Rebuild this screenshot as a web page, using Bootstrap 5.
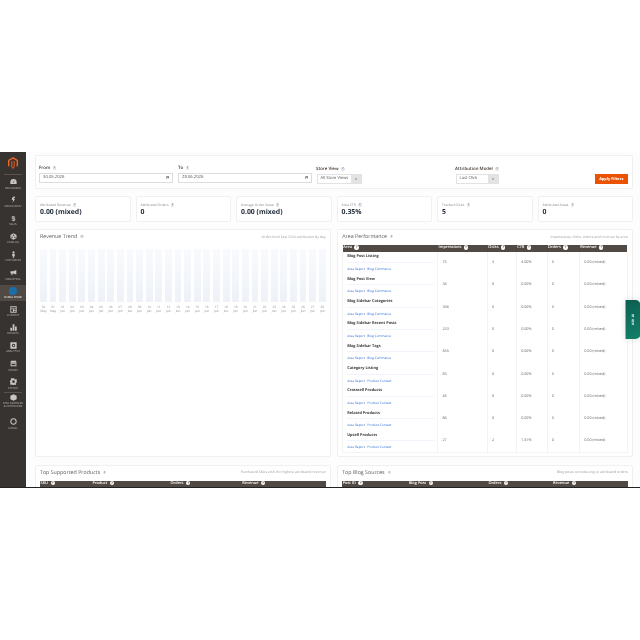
<!DOCTYPE html>
<html lang="en">
<head>
<meta charset="utf-8">
<title>Attribution dashboard</title>
<link href="https://cdn.jsdelivr.net/npm/bootstrap@5.3.0/dist/css/bootstrap.min.css" rel="stylesheet">
<style>
html,body{margin:0;background:#fff;height:640px;overflow:hidden;font-family:"Open Sans",sans-serif;text-rendering:geometricPrecision;}
.shot{margin-top:152px;height:336px;border-bottom:1px solid #222;overflow:hidden;background:#fdfdfd;filter:blur(.45px);position:relative;}
.side{width:26px;flex:none;background:#373330;color:#c9c5c1;}
.logo-box{height:22px;}
.logo-box svg{width:10px;height:12px;}
.side-item{height:18.2px;color:#bdb8b3;}
.side-item svg{width:7px;height:7px;fill:#c9c5c1;flex:none;}
.side-item span{font-size:2.7px;line-height:3.2px;text-transform:uppercase;margin-top:1.4px;text-align:center;white-space:nowrap;}
.side-active{background:#514943;color:#fff;height:16.4px;margin:.8px 0 1px;}
.dot{width:7.5px;height:7.5px;border-radius:50%;background:#1c6ea8;flex:none;}
.side-rule{height:1px;background:#5a534d;margin:-1px 4px 0;}
.side-tall{height:21.6px;padding-top:.6px;}
.side-top{height:1px;background:#5a534d;margin:0 4px;}
.main-area{padding:2.5px 7px 0 9px;min-width:0;flex:1;}
.pane{background:#fff;border:1px solid #f0f0f0;border-radius:2px;}
.filter-pane{height:34px;padding:0 4px 4px 3px;align-items:flex-end;}
.lbl{font-size:4.4px;line-height:5px;color:#41362f;font-weight:600;margin-bottom:1.5px;white-space:nowrap;}
.lbl-date{width:134px;margin-right:5px;margin-bottom:1px;}
.lbl-date + .lbl-date{margin-right:4px;}
.fake-input{height:10px;border:1px solid #dcdcdc;background:#fff;font-size:4.2px;line-height:8px;color:#555;padding:0 3px;align-items:center;justify-content:space-between;}
.fake-input svg{width:3.5px;height:3.5px;flex:none;}
.fake-sel{height:10px;border:1px solid #e2e2e2;background:#fff;font-size:4.1px;line-height:8px;color:#555;align-items:stretch;margin-left:1px;}
.fake-sel b{font-weight:400;padding:0 2.5px;display:flex;align-items:center;flex:1;white-space:nowrap;}
.fake-sel i{width:10px;flex:none;background:#e3e3e3;display:flex;align-items:center;justify-content:center;font-style:normal;font-size:3px;color:#514943;}
.store-col{width:46px;margin-right:93px;}
.model-col{width:44px;}
.apply{height:10px;width:33.5px;background:#eb5202;border:0;color:#fff;font-size:3.9px;line-height:10px;font-weight:700;padding:0;border-radius:0;white-space:nowrap;margin-left:auto;}
.kpi-grid{display:grid;grid-template-columns:repeat(6,1fr);gap:5px;margin-top:7.5px;}
.kpi{height:25.5px;padding:6px 4px 0;}
.kpi-t{font-size:3.4px;line-height:4px;color:#8a8a8a;white-space:nowrap;}
.kpi-v{font-size:6.9px;line-height:8px;font-weight:700;color:#1f2937;margin-top:2.4px;white-space:nowrap;}
.q{display:inline-block;width:3.4px;height:3.4px;border-radius:50%;background:#dde3ea;color:#667;font-size:2.6px;line-height:3.4px;text-align:center;font-weight:700;margin-left:1.5px;vertical-align:middle;}
.two-col{display:grid;grid-template-columns:295.7px 295.7px;gap:7.5px 6.5px;margin-top:7.5px;}
.panel-a{height:228px;padding:0 4px;}
.panel-b{height:60px;padding:0 4px;}
.p-head{height:15.3px;padding-bottom:1px;align-items:center;justify-content:space-between;}
.p-title{font-size:5.3px;color:#5b5b5b;font-weight:500;white-space:nowrap;}
.p-note{font-size:3.5px;color:#9a9a9a;white-space:nowrap;}
.bars{display:grid;grid-template-columns:repeat(30,1fr);column-gap:2.75px;margin-top:3.4px;}
.bar-col{text-align:center;font-size:3.1px;line-height:4px;color:#8d8d8d;min-width:0;}
.bar-fill{height:53.5px;background:linear-gradient(#f8fafd,#eef2f8);margin-bottom:2.5px;}
.perf{width:100%;table-layout:fixed;border-collapse:collapse;margin:0;}
.perf th{background:#514943;color:#fff;font-size:3.9px;line-height:6px;height:6px;font-weight:600;padding:0 0 0 .5px;white-space:nowrap;border:0;}
.perf th .q{background:#fff;color:#514943;width:4.4px;height:4.4px;line-height:4.4px;font-size:3.2px;}
.perf td{height:22.33px;padding:0 4px;font-size:3.7px;color:#666;border:0;border-right:1px solid #f3f3f3;vertical-align:middle;white-space:nowrap;background:#fff;}
.perf tr:last-child td{border-bottom:1px solid #f3f3f3;}
.perf td:first-child{border-left:1px solid #f3f3f3;}
.c1{width:95.3px;}.c2{width:49.4px;}.c3{width:29.3px;}.c4{width:30.7px;}.c5{width:32.4px;}
.a-name{font-size:3.85px;font-weight:700;color:#3b3b3b;line-height:5px;}
.a-bar{height:1px;background:#f0f4fb;margin:2.6px 0 3.9px;width:88px;}
.a-links{font-size:3.2px;line-height:4px;color:#2f6fd6;}
.a-links span{margin-right:2.4px;}
.s1{width:52px;}.s2{width:78px;}.s3{width:71.7px;}
.p1{width:66px;}.p2{width:79.7px;}.p3{width:64.6px;}
.ai-tab{position:absolute;right:0;top:148px;width:14.5px;height:39px;background:linear-gradient(160deg,#12806a,#0c5f50);border-radius:5px 0 0 5px;box-shadow:0 0 7px rgba(0,0,0,.12);color:#fff;font-size:3.2px;font-weight:700;writing-mode:vertical-rl;transform:rotate(180deg);text-align:center;line-height:14.5px;letter-spacing:.2px;}
</style>
</head>
<body>
<div class="shot d-flex">
  <nav class="side d-flex flex-column">
    <div class="logo-box d-flex align-items-center justify-content-center">
      <svg viewBox="0 0 20 24"><path fill="#f26322" d="M10 0 0 5.8v12L2.8 19.4V7.500L10 3.300l7.200 4.200v11.900l2.800-1.600v-12Zm-1.400 7.700v12.600L10 21.200l1.400-.9V7.700l1.900 1v11.200L10 24l-3.300-4.100V8.700Z"/></svg>
    </div>
    <div class="side-top"></div>
    <div class="side-item d-flex flex-column align-items-center justify-content-center"><svg viewBox="0 0 10 10"><path d="M5 1.500a4.500 4.500 0 0 0-4.500 4.500v2.500h9V6A4.500 4.500 0 0 0 5 1.500Zm-.6 5 1.600-3 .4.200-1 3.200Z"/></svg><span>Dashboard</span></div>
    <div class="side-item d-flex flex-column align-items-center justify-content-center"><svg viewBox="0 0 10 10"><path d="M6 .5 7.500 2 5 3.500 7 5 3.500 9.500 4.500 6 2.500 5 3 2.500Z"/></svg><span>Media Menu</span></div>
    <div class="side-item d-flex flex-column align-items-center justify-content-center"><svg viewBox="0 0 10 10"><text x="5" y="9" text-anchor="middle" font-size="10" font-weight="700" fill="#c9c5c1" font-family="Liberation Sans">$</text></svg><span>Sales</span></div>
    <div class="side-item d-flex flex-column align-items-center justify-content-center"><svg viewBox="0 0 10 10"><path d="m5 .5 4.300 2.400v4.400L5 9.700.7 7.300V2.900Zm0 1.700a1 1 0 1 0 0 2 1 1 0 0 0 0-2ZM3 5a1 1 0 1 0 0 2 1 1 0 0 0 0-2Zm4 0a1 1 0 1 0 0 2 1 1 0 0 0 0-2Z"/></svg><span>Catalog</span></div>
    <div class="side-item d-flex flex-column align-items-center justify-content-center"><svg viewBox="0 0 10 10"><path d="M5 .3a1.600 1.600 0 1 1 0 3.200A1.600 1.600 0 0 1 5 .3ZM3.200 4h3.600v3H6v2.700H4V7h-.8Z"/></svg><span>Customers</span></div>
    <div class="side-item d-flex flex-column align-items-center justify-content-center"><svg viewBox="0 0 10 10"><path d="M9 1.500v6.500L4.500 6.300H3.200l.6 2.700H2.500L1.800 6.300H.7V3.200h3.800Z"/></svg><span>Marketing</span></div>
    <div class="side-item side-active d-flex flex-column align-items-center justify-content-center"><div class="dot"></div><span>Komal Store</span></div>
    <div class="side-item d-flex flex-column align-items-center justify-content-center"><svg viewBox="0 0 10 10"><path fill-rule="evenodd" d="M.5.500h9v9h-9Zm1.200 1.200V3.400h6.600V1.700Zm0 2.800v3.800h2.600V4.500Zm3.800 0v1.200h2.800V4.500Zm0 2.300v1.500h2.800V6.800Z"/></svg><span>Content</span></div>
    <div class="side-item d-flex flex-column align-items-center justify-content-center"><svg viewBox="0 0 10 10"><path d="M.5 5.500h2.500v4H.5Zm3.300-5h2.500v9H3.800Zm3.300 3h2.500v6H7.100Z"/></svg><span>Reports</span></div>
    <div class="side-item d-flex flex-column align-items-center justify-content-center"><svg viewBox="0 0 10 10"><path fill-rule="evenodd" d="M.5.500h9v9h-9ZM5 2.500a2.500 2.500 0 1 0 0 5 2.500 2.500 0 0 0 0-5Zm0 1.300a1.200 1.200 0 1 1 0 2.400 1.200 1.200 0 0 1 0-2.400Z"/></svg><span>Analytics</span></div>
    <div class="side-item d-flex flex-column align-items-center justify-content-center"><svg viewBox="0 0 10 10"><path d="M1.500 1h7l1 3H.5Zm-.7 3.800h8.400V9H.8Zm1.400 1v1.800h5.600V5.800Z"/></svg><span>Stores</span></div>
    <div class="side-item d-flex flex-column align-items-center justify-content-center"><svg viewBox="0 0 10 10"><path fill-rule="evenodd" d="M4 .3h2l.3 1.400 1.200.5 1.200-.8 1.300 1.400-.8 1.200.5 1.200L10 4.500v2l-1.300.1-.5 1.200.8 1.100-1.400 1.300-1.200-.8-1.100.5-.3.9H3.800l-.3-1.100-1.100-.5-1.200.8L0 8.200l.8-1.200-.5-1.100L0 5.500v-2l1.300-.3.500-1.200L1 .9 2.400 0l1.200.8Zm1 3a1.900 1.900 0 1 0 0 3.800A1.900 1.900 0 0 0 5 3.300Z"/></svg><span>System</span></div>
    <div class="side-rule"></div>
    <div class="side-item side-tall d-flex flex-column align-items-center justify-content-start"><svg viewBox="0 0 10 10"><path d="m5 .3 4.500 2.200v5L5 9.700.5 7.500v-5Z"/></svg><span>Find Partners<br>&amp; Extensions</span></div>
    <div class="side-item d-flex flex-column align-items-center justify-content-center"><svg viewBox="0 0 10 10"><path fill-rule="evenodd" d="M5 .5a4.500 4.500 0 1 1 0 9 4.500 4.500 0 0 1 0-9Zm0 1.400a3.100 3.100 0 1 0 0 6.200 3.100 3.100 0 0 0 0-6.200Z"/></svg><span>Komal</span></div>
  </nav>
  <main class="main-area">
    <section class="pane filter-pane d-flex">
      <div class="lbl-date">
        <div class="lbl">From <span class="q">?</span></div>
        <div class="fake-input d-flex"><span>30.05.2026</span><svg viewBox="0 0 10 10"><path fill="#333" fill-rule="evenodd" d="M1 1.500h8V9.500H1Zm1 3V8.500h6V4.500Z"/></svg></div>
      </div>
      <div class="lbl-date">
        <div class="lbl">To <span class="q">?</span></div>
        <div class="fake-input d-flex"><span>28.06.2026</span><svg viewBox="0 0 10 10"><path fill="#333" fill-rule="evenodd" d="M1 1.500h8V9.500H1Zm1 3V8.500h6V4.500Z"/></svg></div>
      </div>
      <div class="store-col">
        <div class="lbl">Store View <span class="q">?</span></div>
        <div class="fake-sel d-flex"><b>All Store Views</b><i>▾</i></div>
      </div>
      <div class="model-col">
        <div class="lbl">Attribution Model <span class="q">?</span></div>
        <div class="fake-sel d-flex"><b>Last Click</b><i>▾</i></div>
      </div>
      <button class="btn apply" type="button">Apply Filters</button>
    </section>
    <section class="kpi-grid">
      <div class="pane kpi"><div class="kpi-t">Attributed Revenue <span class="q">?</span></div><div class="kpi-v">0.00 (mixed)</div></div>
      <div class="pane kpi"><div class="kpi-t">Attributed Orders <span class="q">?</span></div><div class="kpi-v">0</div></div>
      <div class="pane kpi"><div class="kpi-t">Average Order Value <span class="q">?</span></div><div class="kpi-v">0.00 (mixed)</div></div>
      <div class="pane kpi"><div class="kpi-t">Area CTR <span class="q">?</span></div><div class="kpi-v">0.35%</div></div>
      <div class="pane kpi"><div class="kpi-t">Tracked Clicks <span class="q">?</span></div><div class="kpi-v">5</div></div>
      <div class="pane kpi"><div class="kpi-t">Attributed Areas <span class="q">?</span></div><div class="kpi-v">0</div></div>
    </section>
    <section class="two-col">
      <div class="pane panel-a">
        <div class="p-head d-flex"><span class="p-title">Revenue Trend <span class="q">?</span></span><span class="p-note">Order-level Last Click attribution by day</span></div>
        <div class="bars">
          <div class="bar-col"><div class="bar-fill"></div>30<br>May</div>
          <div class="bar-col"><div class="bar-fill"></div>31<br>May</div>
          <div class="bar-col"><div class="bar-fill"></div>01<br>Jun</div>
          <div class="bar-col"><div class="bar-fill"></div>02<br>Jun</div>
          <div class="bar-col"><div class="bar-fill"></div>03<br>Jun</div>
          <div class="bar-col"><div class="bar-fill"></div>04<br>Jun</div>
          <div class="bar-col"><div class="bar-fill"></div>05<br>Jun</div>
          <div class="bar-col"><div class="bar-fill"></div>06<br>Jun</div>
          <div class="bar-col"><div class="bar-fill"></div>07<br>Jun</div>
          <div class="bar-col"><div class="bar-fill"></div>08<br>Jun</div>
          <div class="bar-col"><div class="bar-fill"></div>09<br>Jun</div>
          <div class="bar-col"><div class="bar-fill"></div>10<br>Jun</div>
          <div class="bar-col"><div class="bar-fill"></div>11<br>Jun</div>
          <div class="bar-col"><div class="bar-fill"></div>12<br>Jun</div>
          <div class="bar-col"><div class="bar-fill"></div>13<br>Jun</div>
          <div class="bar-col"><div class="bar-fill"></div>14<br>Jun</div>
          <div class="bar-col"><div class="bar-fill"></div>15<br>Jun</div>
          <div class="bar-col"><div class="bar-fill"></div>16<br>Jun</div>
          <div class="bar-col"><div class="bar-fill"></div>17<br>Jun</div>
          <div class="bar-col"><div class="bar-fill"></div>18<br>Jun</div>
          <div class="bar-col"><div class="bar-fill"></div>19<br>Jun</div>
          <div class="bar-col"><div class="bar-fill"></div>20<br>Jun</div>
          <div class="bar-col"><div class="bar-fill"></div>21<br>Jun</div>
          <div class="bar-col"><div class="bar-fill"></div>22<br>Jun</div>
          <div class="bar-col"><div class="bar-fill"></div>23<br>Jun</div>
          <div class="bar-col"><div class="bar-fill"></div>24<br>Jun</div>
          <div class="bar-col"><div class="bar-fill"></div>25<br>Jun</div>
          <div class="bar-col"><div class="bar-fill"></div>26<br>Jun</div>
          <div class="bar-col"><div class="bar-fill"></div>27<br>Jun</div>
          <div class="bar-col"><div class="bar-fill"></div>28<br>Jun</div>
        </div>
      </div>
      <div class="pane panel-a">
        <div class="p-head d-flex"><span class="p-title">Area Performance <span class="q">?</span></span><span class="p-note">Impressions, clicks, orders and revenue by area</span></div>
        <table class="perf">
          <thead><tr><th class="c1">Area <span class="q">?</span></th><th class="c2">Impressions <span class="q">?</span></th><th class="c3">Clicks <span class="q">?</span></th><th class="c4">CTR <span class="q">?</span></th><th class="c5">Orders <span class="q">?</span></th><th>Revenue <span class="q">?</span></th></tr></thead>
          <tbody>
            <tr><td><div class="a-name">Blog Post Listing</div><div class="a-bar"></div><div class="a-links"><span>Area Report</span><span>Blog Commerce</span></div></td><td>75</td><td>3</td><td>4.00%</td><td>0</td><td>0.00 (mixed)</td></tr>
            <tr><td><div class="a-name">Blog Post View</div><div class="a-bar"></div><div class="a-links"><span>Area Report</span><span>Blog Commerce</span></div></td><td>34</td><td>0</td><td>0.00%</td><td>0</td><td>0.00 (mixed)</td></tr>
            <tr><td><div class="a-name">Blog Sidebar Categories</div><div class="a-bar"></div><div class="a-links"><span>Area Report</span><span>Blog Commerce</span></div></td><td>396</td><td>0</td><td>0.00%</td><td>0</td><td>0.00 (mixed)</td></tr>
            <tr><td><div class="a-name">Blog Sidebar Recent Posts</div><div class="a-bar"></div><div class="a-links"><span>Area Report</span><span>Blog Commerce</span></div></td><td>233</td><td>0</td><td>0.00%</td><td>0</td><td>0.00 (mixed)</td></tr>
            <tr><td><div class="a-name">Blog Sidebar Tags</div><div class="a-bar"></div><div class="a-links"><span>Area Report</span><span>Blog Commerce</span></div></td><td>455</td><td>0</td><td>0.00%</td><td>0</td><td>0.00 (mixed)</td></tr>
            <tr><td><div class="a-name">Category Listing</div><div class="a-bar"></div><div class="a-links"><span>Area Report</span><span>Product Context</span></div></td><td>83</td><td>0</td><td>0.00%</td><td>0</td><td>0.00 (mixed)</td></tr>
            <tr><td><div class="a-name">Crosssell Products</div><div class="a-bar"></div><div class="a-links"><span>Area Report</span><span>Product Context</span></div></td><td>44</td><td>0</td><td>0.00%</td><td>0</td><td>0.00 (mixed)</td></tr>
            <tr><td><div class="a-name">Related Products</div><div class="a-bar"></div><div class="a-links"><span>Area Report</span><span>Product Context</span></div></td><td>86</td><td>0</td><td>0.00%</td><td>0</td><td>0.00 (mixed)</td></tr>
            <tr><td><div class="a-name">Upsell Products</div><div class="a-bar"></div><div class="a-links"><span>Area Report</span><span>Product Context</span></div></td><td>27</td><td>2</td><td>7.41%</td><td>0</td><td>0.00 (mixed)</td></tr>
          </tbody>
        </table>
      </div>
      <div class="pane panel-b">
        <div class="p-head d-flex"><span class="p-title">Top Supported Products <span class="q">?</span></span><span class="p-note">Purchased SKUs with the highest attributed revenue</span></div>
        <table class="perf"><thead><tr><th class="s1">SKU <span class="q">?</span></th><th class="s2">Product <span class="q">?</span></th><th class="s3">Orders <span class="q">?</span></th><th>Revenue <span class="q">?</span></th></tr></thead></table>
      </div>
      <div class="pane panel-b">
        <div class="p-head d-flex"><span class="p-title">Top Blog Sources <span class="q">?</span></span><span class="p-note">Blog posts contributing to attributed orders</span></div>
        <table class="perf"><thead><tr><th class="p1">Post ID <span class="q">?</span></th><th class="p2">Blog Post <span class="q">?</span></th><th class="p3">Orders <span class="q">?</span></th><th>Revenue <span class="q">?</span></th></tr></thead></table>
      </div>
    </section>
  </main>
  <div class="ai-tab">ASK AI</div>
</div>
<script src="https://cdn.jsdelivr.net/npm/bootstrap@5.3.0/dist/js/bootstrap.bundle.min.js"></script>
</body>
</html>
